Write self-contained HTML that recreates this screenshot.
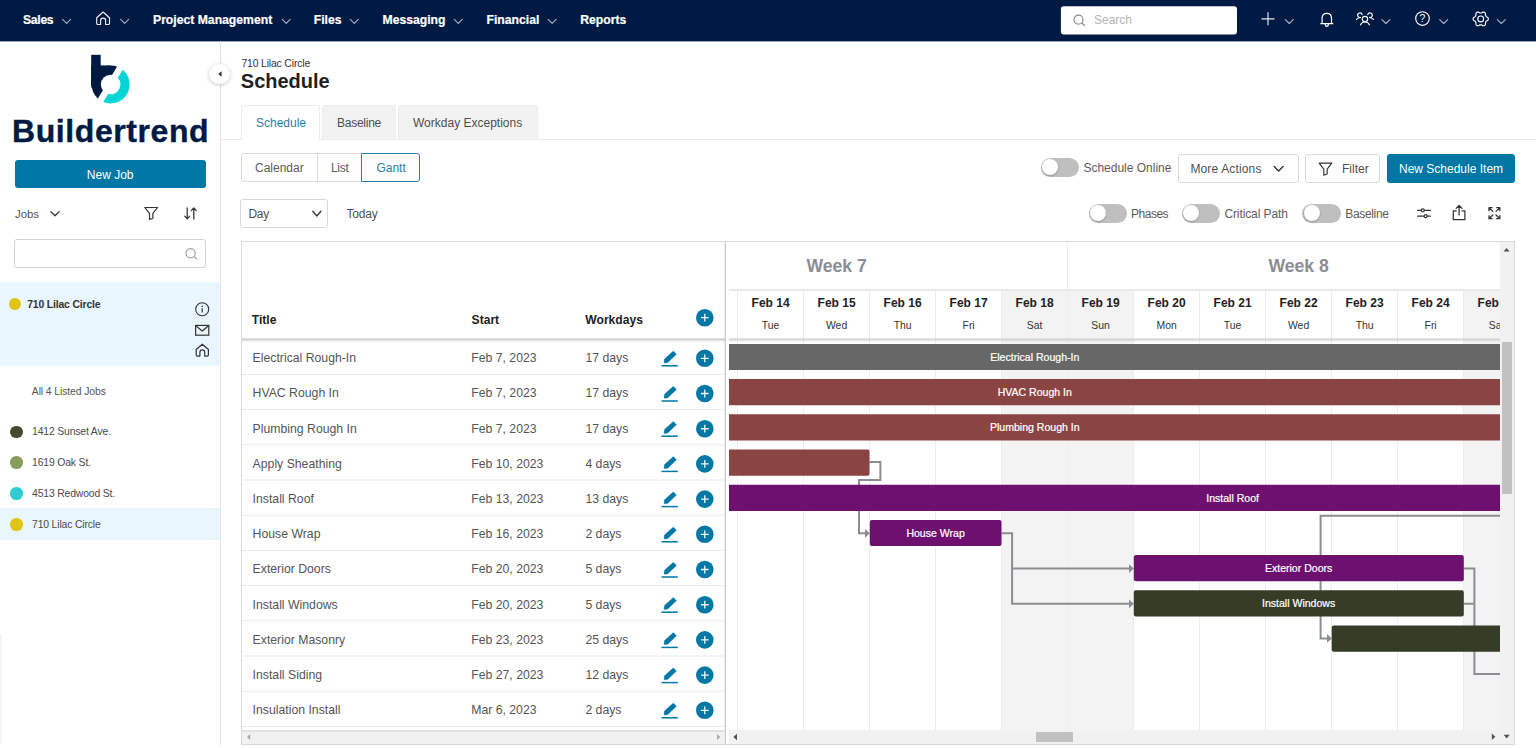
<!DOCTYPE html>
<html lang="en"><head><meta charset="utf-8"><title>Schedule - Buildertrend</title><style>
*{box-sizing:border-box;margin:0;padding:0}
html,body{width:1536px;height:748px;overflow:hidden;background:#fff}
body{position:relative;font-family:"Liberation Sans",Arial,sans-serif;font-size:12px;color:#404040}
.a{position:absolute}
.t{position:absolute;white-space:nowrap;height:20px;line-height:20px}
.nav{position:absolute;left:0;top:0;width:1536px;height:41px;background:#001a43}
.nv{color:#fff;font-weight:bold;font-size:12.2px;top:10.2px;-webkit-text-stroke:0.2px #fff}
svg{position:absolute;overflow:visible}
.ui{font-size:12px;color:#4f4f4f}
.btn{position:absolute;border:1px solid #d9d9d9;border-radius:3px;background:#fff}
.tog{position:absolute;width:38.4px;height:19px;border-radius:9.5px;background:#bfbfbf}
.tog i{position:absolute;left:1.5px;top:1.5px;width:16px;height:16px;border-radius:50%;background:#fff;box-shadow:0 1px 2px rgba(0,0,0,.25)}
.dot{position:absolute;width:12.6px;height:12.6px;border-radius:50%}
.sj{font-size:10.4px;letter-spacing:-0.15px;color:#4a4a4a}
.gh{font-weight:bold;font-size:12.1px;color:#222}
.gc{font-size:12.25px;color:#555}
.bar{position:absolute;height:26px;border-radius:2px;color:#fff;font-size:10.55px;-webkit-text-stroke:0.2px #fff;line-height:26px;white-space:nowrap;overflow:hidden}
.bar span{position:absolute;top:0.8px;transform:translateX(-50%)}
.dh{position:absolute;width:66px;text-align:center;white-space:nowrap}
.dh b{position:absolute;left:0;width:66px;top:0.5px;height:20px;line-height:20px;font-size:12px;color:#222}
.dh em{position:absolute;left:0;width:66px;top:23.6px;height:20px;line-height:20px;font-size:10.4px;font-style:normal;color:#333}
</style></head><body>
<div class="nav">
<div class="t nv" style="left:23px;letter-spacing:-0.3px">Sales</div>
<div class="t nv" style="left:153px">Project Management</div>
<div class="t nv" style="left:313.7px">Files</div>
<div class="t nv" style="left:382.5px">Messaging</div>
<div class="t nv" style="left:486.5px">Financial</div>
<div class="t nv" style="left:580.2px">Reports</div>
<svg style="left:0;top:0" width="1536" height="43" viewBox="0 0 1536 43"><rect x="0" y="41" width="1536" height="1" fill="#001a43" fill-opacity="0.4"/><rect x="1060.9" y="6.3" width="176.1" height="28.1" rx="3" fill="#fff"/></svg>
<div class="t" style="left:1094px;top:10px;font-size:12px;color:#b5b5b5">Search</div>
</div>
<div class="a" style="left:220px;top:41px;width:1px;height:704px;background:#e2e2e2"></div>
<div class="t" style="left:12px;top:110.8px;height:40px;line-height:40px;font-size:32px;font-weight:bold;color:#001a43;letter-spacing:0.58px;-webkit-text-stroke:0.4px #001a43">Buildertrend</div>
<div class="a" style="left:14.5px;top:160.2px;width:191.3px;height:28px;border-radius:3px;background:#0077a4"></div>
<div class="t" style="left:14.5px;width:191.3px;text-align:center;top:165.3px;color:#fff;font-size:12px">New Job</div>
<div class="t" style="left:15px;top:203.6px;font-size:11.4px;color:#555">Jobs</div>
<div class="a" style="left:14px;top:239px;width:192px;height:29px;border:1px solid #d4d4d4;border-radius:3px;background:#fff"></div>
<div class="a" style="left:0;top:282px;width:220px;height:84.4px;background:#eaf6fe"></div>
<div class="dot" style="left:8.7px;top:297.7px;background:#e0c514"></div>
<div class="t sj" style="left:27.2px;top:294.8px;font-weight:bold;color:#333">710 Lilac Circle</div>
<div class="t sj" style="left:31.8px;top:381.8px;letter-spacing:-0.1px;color:#555">All 4 Listed Jobs</div>
<div class="a" style="left:0;top:508.4px;width:220px;height:31.2px;background:#eaf6fe"></div>
<div class="dot" style="left:10.2px;top:425.6px;background:#424c2d"></div>
<div class="t sj" style="left:32px;top:422.4px">1412 Sunset Ave.</div>
<div class="dot" style="left:10.2px;top:456.4px;background:#869e5c"></div>
<div class="t sj" style="left:32px;top:453.2px">1619 Oak St.</div>
<div class="dot" style="left:10.2px;top:487.2px;background:#2ecbd3"></div>
<div class="t sj" style="left:32px;top:484.0px">4513 Redwood St.</div>
<div class="dot" style="left:10.2px;top:518.0px;background:#e0c514"></div>
<div class="t sj" style="left:32px;top:514.8px">710 Lilac Circle</div>
<div class="a" style="left:209.4px;top:63.6px;width:20.8px;height:20.8px;border-radius:50%;background:#fff;box-shadow:0 1px 4px rgba(0,0,0,.22)"></div>
<div class="t sj" style="left:241.4px;top:54.3px;color:#333">710 Lilac Circle</div>
<div class="t" style="left:240.8px;top:65.8px;height:30px;line-height:30px;font-size:20px;font-weight:bold;color:#1f1f1f">Schedule</div>
<div class="a" style="left:221px;top:139px;width:1315px;height:1px;background:#ebebeb"></div>
<div class="a" style="left:241.4px;top:105.4px;width:79px;height:34.6px;background:#fff;border:1px solid #ebebeb;border-bottom:none;border-radius:3px 3px 0 0"></div>
<div class="a" style="left:322.4px;top:105.4px;width:73.2px;height:33.6px;background:#f2f2f2;border:1px solid #ececec;border-bottom:none;border-radius:3px 3px 0 0"></div>
<div class="a" style="left:398.3px;top:105.4px;width:139.3px;height:33.6px;background:#f2f2f2;border:1px solid #ececec;border-bottom:none;border-radius:3px 3px 0 0"></div>
<div class="t ui" style="left:256px;top:113px;color:#2a7fa9">Schedule</div>
<div class="t ui" style="left:337px;top:113px;letter-spacing:-0.25px">Baseline</div>
<div class="t ui" style="left:413px;top:113px">Workday Exceptions</div>
<div class="btn" style="left:241px;top:153px;width:121px;height:29px;border-radius:3px 0 0 3px"></div>
<div class="a" style="left:317px;top:153px;width:1px;height:29px;background:#d9d9d9"></div>
<div class="btn" style="left:361px;top:153px;width:59px;height:29px;border-color:#2a7fa9;border-radius:0 3px 3px 0"></div>
<div class="t ui" style="left:255px;top:158.4px;color:#5a5a5a">Calendar</div>
<div class="t ui" style="left:331px;top:158.4px;letter-spacing:-0.3px;color:#5a5a5a">List</div>
<div class="t ui" style="left:376.4px;top:158.4px;color:#2a7fa9">Gantt</div>
<div class="btn" style="left:240px;top:199px;width:88px;height:29px"></div>
<div class="t ui" style="left:248.6px;top:204.2px;letter-spacing:-0.4px">Day</div>
<div class="t ui" style="left:346.4px;top:204.2px;letter-spacing:-0.15px">Today</div>
<div class="tog" style="left:1040.6px;top:157.9px"><i></i></div>
<div class="t ui" style="left:1083.4px;top:158px;color:#5c5c5c">Schedule Online</div>
<div class="btn" style="left:1178px;top:154px;width:121px;height:29px"></div>
<div class="t ui" style="left:1190.4px;top:159px;letter-spacing:0.15px">More Actions</div>
<div class="btn" style="left:1305px;top:154px;width:75px;height:29px"></div>
<div class="t ui" style="left:1342px;top:158.7px">Filter</div>
<div class="a" style="left:1387px;top:154px;width:128.4px;height:28.6px;border-radius:3px;background:#0077a4"></div>
<div class="t ui" style="left:1399px;top:158.7px;color:#fff">New Schedule Item</div>
<div class="tog" style="left:1088.8px;top:203.7px"><i></i></div>
<div class="t ui" style="left:1131.1px;top:203.8px;color:#5c5c5c;letter-spacing:-0.5px">Phases</div>
<div class="tog" style="left:1181.6px;top:203.7px"><i></i></div>
<div class="t ui" style="left:1224.4px;top:203.8px;color:#5c5c5c;letter-spacing:-0.1px">Critical Path</div>
<div class="tog" style="left:1302.2px;top:203.7px"><i></i></div>
<div class="t ui" style="left:1345.3px;top:203.8px;color:#5c5c5c;letter-spacing:-0.35px">Baseline</div>
<div class="a" style="left:241px;top:241px;width:1273.6px;height:503.6px;border:1px solid #dadada;background:#fff"></div>
<div class="a" style="left:1001.6px;top:291px;width:132px;height:439px;background:#f3f3f3"></div>
<div class="a" style="left:1463.6px;top:291px;width:36.6px;height:439px;background:#f3f3f3"></div>
<div class="a" style="left:729px;top:289px;width:771.2px;height:2px;background:#e9e9e9"></div>
<div class="a" style="left:1067.1px;top:242px;width:1px;height:48px;background:#ececec"></div>
<div class="a" style="left:737.1px;top:291px;width:1px;height:439px;background:#ececec"></div>
<div class="a" style="left:803.1px;top:291px;width:1px;height:439px;background:#ececec"></div>
<div class="a" style="left:869.1px;top:291px;width:1px;height:439px;background:#ececec"></div>
<div class="a" style="left:935.1px;top:291px;width:1px;height:439px;background:#ececec"></div>
<div class="a" style="left:1001.1px;top:291px;width:1px;height:439px;background:#ececec"></div>
<div class="a" style="left:1067.1px;top:291px;width:1px;height:439px;background:#ececec"></div>
<div class="a" style="left:1133.1px;top:291px;width:1px;height:439px;background:#ececec"></div>
<div class="a" style="left:1199.1px;top:291px;width:1px;height:439px;background:#ececec"></div>
<div class="a" style="left:1265.1px;top:291px;width:1px;height:439px;background:#ececec"></div>
<div class="a" style="left:1331.1px;top:291px;width:1px;height:439px;background:#ececec"></div>
<div class="a" style="left:1397.1px;top:291px;width:1px;height:439px;background:#ececec"></div>
<div class="a" style="left:1463.1px;top:291px;width:1px;height:439px;background:#ececec"></div>
<div class="t" style="left:605.6px;width:462px;text-align:center;top:252.3px;height:28px;line-height:28px;font-size:17.6px;font-weight:bold;color:#8a8d92">Week 7</div>
<div class="a" style="left:1067.6px;width:432.6px;top:242px;height:47px;overflow:hidden"><div class="t" style="left:0;width:462px;text-align:center;top:10.3px;height:28px;line-height:28px;font-size:17.6px;font-weight:bold;color:#8a8d92">Week 8</div></div>
<div class="a" style="left:729px;top:291px;width:771.2px;height:48px;overflow:hidden">
<div class="dh" style="left:8.6px;top:1.2px"><b>Feb 14</b><em>Tue</em></div>
<div class="dh" style="left:74.6px;top:1.2px"><b>Feb 15</b><em>Wed</em></div>
<div class="dh" style="left:140.6px;top:1.2px"><b>Feb 16</b><em>Thu</em></div>
<div class="dh" style="left:206.6px;top:1.2px"><b>Feb 17</b><em>Fri</em></div>
<div class="dh" style="left:272.6px;top:1.2px"><b>Feb 18</b><em>Sat</em></div>
<div class="dh" style="left:338.6px;top:1.2px"><b>Feb 19</b><em>Sun</em></div>
<div class="dh" style="left:404.6px;top:1.2px"><b>Feb 20</b><em>Mon</em></div>
<div class="dh" style="left:470.6px;top:1.2px"><b>Feb 21</b><em>Tue</em></div>
<div class="dh" style="left:536.6px;top:1.2px"><b>Feb 22</b><em>Wed</em></div>
<div class="dh" style="left:602.6px;top:1.2px"><b>Feb 23</b><em>Thu</em></div>
<div class="dh" style="left:668.6px;top:1.2px"><b>Feb 24</b><em>Fri</em></div>
<div class="dh" style="left:734.6px;top:1.2px"><b>Feb 25</b><em>Sat</em></div>
</div>
<div class="t gh" style="left:251.8px;top:310px">Title</div>
<div class="t gh" style="left:471.6px;top:310px">Start</div>
<div class="t gh" style="left:585.3px;top:310px">Workdays</div>
<svg style="left:0;top:0" width="1536" height="748" viewBox="0 0 1536 748"><rect x="242" y="338.4" width="483" height="1.9" fill="#cecece"/><rect x="242" y="340.3" width="483" height="1.5" fill="#000" fill-opacity="0.06"/><rect x="729" y="338.4" width="771.2" height="1.9" fill="#d4d4d4"/><rect x="729" y="340.3" width="771.2" height="1.5" fill="#000" fill-opacity="0.06"/></svg>
<div class="t gc" style="left:252.6px;top:348.1px">Electrical Rough-In</div>
<div class="t gc" style="left:471.2px;top:348.1px">Feb 7, 2023</div>
<div class="t gc" style="left:585.4px;top:348.1px">17 days</div>
<div class="t gc" style="left:252.6px;top:383.3px">HVAC Rough In</div>
<div class="t gc" style="left:471.2px;top:383.3px">Feb 7, 2023</div>
<div class="t gc" style="left:585.4px;top:383.3px">17 days</div>
<div class="t gc" style="left:252.6px;top:418.5px">Plumbing Rough In</div>
<div class="t gc" style="left:471.2px;top:418.5px">Feb 7, 2023</div>
<div class="t gc" style="left:585.4px;top:418.5px">17 days</div>
<div class="t gc" style="left:252.6px;top:453.7px">Apply Sheathing</div>
<div class="t gc" style="left:471.2px;top:453.7px">Feb 10, 2023</div>
<div class="t gc" style="left:585.4px;top:453.7px">4 days</div>
<div class="t gc" style="left:252.6px;top:488.9px">Install Roof</div>
<div class="t gc" style="left:471.2px;top:488.9px">Feb 13, 2023</div>
<div class="t gc" style="left:585.4px;top:488.9px">13 days</div>
<div class="t gc" style="left:252.6px;top:524.1px">House Wrap</div>
<div class="t gc" style="left:471.2px;top:524.1px">Feb 16, 2023</div>
<div class="t gc" style="left:585.4px;top:524.1px">2 days</div>
<div class="t gc" style="left:252.6px;top:559.3px">Exterior Doors</div>
<div class="t gc" style="left:471.2px;top:559.3px">Feb 20, 2023</div>
<div class="t gc" style="left:585.4px;top:559.3px">5 days</div>
<div class="t gc" style="left:252.6px;top:594.5px">Install Windows</div>
<div class="t gc" style="left:471.2px;top:594.5px">Feb 20, 2023</div>
<div class="t gc" style="left:585.4px;top:594.5px">5 days</div>
<div class="t gc" style="left:252.6px;top:629.7px">Exterior Masonry</div>
<div class="t gc" style="left:471.2px;top:629.7px">Feb 23, 2023</div>
<div class="t gc" style="left:585.4px;top:629.7px">25 days</div>
<div class="t gc" style="left:252.6px;top:664.9px">Install Siding</div>
<div class="t gc" style="left:471.2px;top:664.9px">Feb 27, 2023</div>
<div class="t gc" style="left:585.4px;top:664.9px">12 days</div>
<div class="t gc" style="left:252.6px;top:700.1px">Insulation Install</div>
<div class="t gc" style="left:471.2px;top:700.1px">Mar 6, 2023</div>
<div class="t gc" style="left:585.4px;top:700.1px">2 days</div>
<svg style="left:0;top:0" width="1536" height="748" viewBox="0 0 1536 748"><defs><clipPath id="tlc"><rect x="729" y="341" width="771.2" height="389"/></clipPath></defs><g clip-path="url(#tlc)"><g fill="none" stroke="#8a8d91" stroke-width="2" stroke-linejoin="miter">
<path d="M869.4 462.0 H880.4 V480.1 H859 V533.3 H866"/>
<path d="M1001.5 533.3 H1012.1 V603.8 H1130 M1012.1 568.6 H1130"/>
<path d="M1502 515.8 H1320.6 V638.4 H1328"/>
<path d="M1463.6 568.6 H1474.4 V673.9 H1502 M1463.6 603.8 H1474.4"/>
</g>
<path d="M869.8 533.3 L865.0 528.9 V537.7 Z" fill="#8a8d91"/>
<path d="M1133.8 568.6 L1129.0 564.2 V573.0 Z" fill="#8a8d91"/>
<path d="M1133.8 603.8 L1129.0 599.4 V608.2 Z" fill="#8a8d91"/>
<path d="M1331.8 638.4 L1327.0 634.0 V642.8 Z" fill="#8a8d91"/>
<rect x="700" y="343.9" width="840.0" height="26.2" rx="2" fill="#676767"/>
<text x="1034.8" y="360.8" text-anchor="middle" font-family="Liberation Sans, Arial, sans-serif" font-size="10.55" fill="#fff" stroke="#fff" stroke-width="0.2">Electrical Rough-In</text>
<rect x="700" y="379.1" width="840.0" height="26.2" rx="2" fill="#8b4444"/>
<text x="1034.8" y="396.0" text-anchor="middle" font-family="Liberation Sans, Arial, sans-serif" font-size="10.55" fill="#fff" stroke="#fff" stroke-width="0.2">HVAC Rough In</text>
<rect x="700" y="414.3" width="840.0" height="26.2" rx="2" fill="#8b4444"/>
<text x="1034.8" y="431.2" text-anchor="middle" font-family="Liberation Sans, Arial, sans-serif" font-size="10.55" fill="#fff" stroke="#fff" stroke-width="0.2">Plumbing Rough In</text>
<rect x="700" y="449.5" width="169.5" height="26.2" rx="2" fill="#8b4444"/>
<rect x="700" y="484.7" width="840.0" height="26.2" rx="2" fill="#6e106f"/>
<text x="1232.6" y="501.6" text-anchor="middle" font-family="Liberation Sans, Arial, sans-serif" font-size="10.55" fill="#fff" stroke="#fff" stroke-width="0.2">Install Roof</text>
<rect x="869.8" y="519.9" width="131.7" height="26.2" rx="2" fill="#6e106f"/>
<text x="935.6" y="536.8" text-anchor="middle" font-family="Liberation Sans, Arial, sans-serif" font-size="10.55" fill="#fff" stroke="#fff" stroke-width="0.2">House Wrap</text>
<rect x="1133.8" y="555.1" width="330.0" height="26.2" rx="2" fill="#6e106f"/>
<text x="1298.6" y="572.0" text-anchor="middle" font-family="Liberation Sans, Arial, sans-serif" font-size="10.55" fill="#fff" stroke="#fff" stroke-width="0.2">Exterior Doors</text>
<rect x="1133.8" y="590.3" width="330.0" height="26.2" rx="2" fill="#353d27"/>
<text x="1298.6" y="607.2" text-anchor="middle" font-family="Liberation Sans, Arial, sans-serif" font-size="10.55" fill="#fff" stroke="#fff" stroke-width="0.2">Install Windows</text>
<rect x="1331.7" y="625.5" width="208.3" height="26.2" rx="2" fill="#353d27"/>
</g></svg>
<div class="a" style="left:724.9px;top:242px;width:1.4px;height:502px;background:#c8c8c8"></div>
<div class="a" style="left:722.9px;top:242px;width:2px;height:502px;background:linear-gradient(to right,rgba(0,0,0,0),rgba(0,0,0,0.07))"></div>
<div class="a" style="left:726.3px;top:242px;width:2.6px;height:502px;background:#fff"></div>
<div class="a" style="left:242px;top:730px;width:483px;height:14px;background:#f1f1f1"></div>
<svg style="left:0;top:0" width="1536" height="748" viewBox="0 0 1536 748"><rect x="242" y="730.2" width="483" height="1.5" fill="#dcdcdc"/></svg>
<div class="a" style="left:729px;top:730px;width:785px;height:14px;background:#f1f1f1"></div>
<div class="a" style="left:1500.2px;top:242px;width:13.6px;height:502px;background:#f1f1f1"></div>
<div class="a" style="left:1036px;top:731.8px;width:37px;height:10.4px;background:#c1c1c1"></div>
<div class="a" style="left:1502px;top:342.2px;width:10px;height:151.6px;background:#c1c1c1"></div>
<svg style="left:0;top:0" width="1536" height="748" viewBox="0 0 1536 748"><path d="M1503.6 251.6 L1506.6 248 L1509.6 251.6 Z" fill="#505050"/><path d="M1503.7 734.8 L1506.7 738.4 L1509.7 734.8 Z" fill="#505050"/><path d="M1491.8 733.6 L1495.4 736.8 L1491.8 740 Z" fill="#505050"/><path d="M737 733.7 L733.4 737 L737 740.3 Z" fill="#505050"/><path d="M717 733.9 L720.2 737 L717 740.1 Z" fill="#a9a9a9"/><path d="M250.2 733.9 L247 737 L250.2 740.1 Z" fill="#a9a9a9"/></svg>
<div class="a" style="left:0;top:634px;width:3px;height:110px;background:linear-gradient(to right,rgba(0,0,0,0.05),rgba(0,0,0,0))"></div>
<svg style="left:0;top:0;pointer-events:none" width="1536" height="748" viewBox="0 0 1536 748"><g transform="translate(62.3 19)"><path d="M0.3 0.4 L4.3 4.3 L8.299999999999999 0.4" fill="none" stroke="#a3acc0" stroke-width="1.15" stroke-linecap="round" stroke-linejoin="round"/></g>
<g transform="translate(120.3 19)"><path d="M0.3 0.4 L4.3 4.3 L8.299999999999999 0.4" fill="none" stroke="#a3acc0" stroke-width="1.15" stroke-linecap="round" stroke-linejoin="round"/></g>
<g transform="translate(281.9 19)"><path d="M0.3 0.4 L4.3 4.3 L8.299999999999999 0.4" fill="none" stroke="#a3acc0" stroke-width="1.15" stroke-linecap="round" stroke-linejoin="round"/></g>
<g transform="translate(350 19)"><path d="M0.3 0.4 L4.3 4.3 L8.299999999999999 0.4" fill="none" stroke="#a3acc0" stroke-width="1.15" stroke-linecap="round" stroke-linejoin="round"/></g>
<g transform="translate(454 19)"><path d="M0.3 0.4 L4.3 4.3 L8.299999999999999 0.4" fill="none" stroke="#a3acc0" stroke-width="1.15" stroke-linecap="round" stroke-linejoin="round"/></g>
<g transform="translate(547.8 19)"><path d="M0.3 0.4 L4.3 4.3 L8.299999999999999 0.4" fill="none" stroke="#a3acc0" stroke-width="1.15" stroke-linecap="round" stroke-linejoin="round"/></g>
<g transform="translate(96 11.2)"><path d="M0.7 6.5 L7.1 0.8 L13.5 6.5 V12 Q13.5 13.3 12.2 13.3 H9.6 V9.2 Q9.6 6.9 7.1 6.9 Q4.6 6.9 4.6 9.2 V13.3 H2 Q0.7 13.3 0.7 12 Z" fill="none" stroke="#eceef3" stroke-width="1.15" stroke-linejoin="round"/></g>
<g transform="translate(1073.3 14.5)"><circle cx="5.2" cy="5.2" r="4.5" fill="none" stroke="#8c8c8c" stroke-width="1.2"/><path d="M8.5 8.5 L11.3 11" stroke="#8c8c8c" stroke-width="1.2" stroke-linecap="round"/></g>
<g transform="translate(1261 12)"><path d="M7 0.3 V13.3 M0.5 6.8 H13.5" stroke="#e6e9ef" stroke-width="1.15" fill="none"/></g>
<g transform="translate(1285 19.2)"><path d="M0.3 0.4 L4.3 4.3 L8.299999999999999 0.4" fill="none" stroke="#a3acc0" stroke-width="1.15" stroke-linecap="round" stroke-linejoin="round"/></g>
<g transform="translate(1320 12.1) scale(1.0000 1.0200)"><path d="M0.8 11.4 H12.8 M2.1 11.4 V6.2 Q2.1 1.2 6.8 1.2 Q11.5 1.2 11.5 6.2 V11.4 M5.2 12 Q5.4 14 6.8 14 Q8.2 14 8.4 12" fill="none" stroke="#fff" stroke-width="1.2" stroke-linecap="round" stroke-linejoin="round"/></g>
<g transform="translate(1356 12)"><g fill="none" stroke="#fff" stroke-width="1.15" stroke-linecap="round"><circle cx="8.95" cy="7.05" r="2.7"/><path d="M4.5 12.8 A4.95 4.95 0 0 1 13.4 12.8"/><path d="M6.15 2.7 A2.3 2.3 0 1 0 4.4 5.45"/><path d="M0.5 7.4 Q1.9 5.8 4.3 5.55"/><path d="M11.75 2.7 A2.3 2.3 0 1 1 13.5 5.45"/><path d="M17.4 7.4 Q16 5.8 13.6 5.55"/></g></g>
<g transform="translate(1381.6 19.2)"><path d="M0.3 0.4 L4.3 4.3 L8.299999999999999 0.4" fill="none" stroke="#a3acc0" stroke-width="1.15" stroke-linecap="round" stroke-linejoin="round"/></g>
<g transform="translate(1415 11)"><circle cx="7.5" cy="7.5" r="6.8" fill="none" stroke="#fff" stroke-width="1.15"/><text x="7.5" y="11.3" text-anchor="middle" font-family="Liberation Sans, Arial, sans-serif" font-size="10.4" fill="#fff">?</text></g>
<g transform="translate(1439.4 19.2)"><path d="M0.3 0.4 L4.3 4.3 L8.299999999999999 0.4" fill="none" stroke="#a3acc0" stroke-width="1.15" stroke-linecap="round" stroke-linejoin="round"/></g>
<g transform="translate(1472.7 10.9)"><path d="M15.60 8.00 L15.54 8.49 L15.38 8.97 L15.09 9.41 L14.52 9.75 L13.94 10.02 L13.60 10.32 L13.33 10.63 L13.11 10.95 L12.94 11.30 L12.81 11.69 L12.72 12.14 L12.77 12.77 L12.77 13.43 L12.53 13.90 L12.20 14.29 L11.80 14.58 L11.34 14.78 L10.85 14.87 L10.32 14.84 L9.75 14.52 L9.22 14.15 L8.79 14.01 L8.39 13.93 L8.00 13.90 L7.61 13.93 L7.21 14.01 L6.78 14.15 L6.25 14.52 L5.68 14.84 L5.15 14.87 L4.66 14.78 L4.20 14.58 L3.80 14.29 L3.47 13.90 L3.23 13.43 L3.23 12.77 L3.28 12.14 L3.19 11.69 L3.06 11.30 L2.89 10.95 L2.67 10.63 L2.40 10.32 L2.06 10.02 L1.48 9.75 L0.91 9.41 L0.62 8.97 L0.46 8.49 L0.40 8.00 L0.46 7.51 L0.62 7.03 L0.91 6.59 L1.48 6.25 L2.06 5.98 L2.40 5.68 L2.67 5.37 L2.89 5.05 L3.06 4.70 L3.19 4.31 L3.28 3.86 L3.23 3.23 L3.23 2.57 L3.47 2.10 L3.80 1.71 L4.20 1.42 L4.66 1.22 L5.15 1.13 L5.68 1.16 L6.25 1.48 L6.78 1.85 L7.21 1.99 L7.61 2.07 L8.00 2.10 L8.39 2.07 L8.79 1.99 L9.22 1.85 L9.75 1.48 L10.32 1.16 L10.85 1.13 L11.34 1.22 L11.80 1.42 L12.20 1.71 L12.53 2.10 L12.77 2.57 L12.77 3.23 L12.72 3.86 L12.81 4.31 L12.94 4.70 L13.11 5.05 L13.33 5.37 L13.60 5.68 L13.94 5.98 L14.52 6.25 L15.09 6.59 L15.38 7.03 L15.54 7.51 Z" fill="none" stroke="#fff" stroke-width="1.15" stroke-linejoin="round"/><circle cx="8" cy="8" r="2.9" fill="none" stroke="#fff" stroke-width="1.15"/></g>
<g transform="translate(1497 19.2)"><path d="M0.3 0.4 L4.3 4.3 L8.299999999999999 0.4" fill="none" stroke="#a3acc0" stroke-width="1.15" stroke-linecap="round" stroke-linejoin="round"/></g>
<g transform="translate(80 48)"><defs><mask id="lh"><rect x="0" y="0" width="60" height="62" fill="#fff"/><circle cx="30.65" cy="36.45" r="9.8" fill="#000"/></mask><clipPath id="ln"><polygon points="48.08,0.26 6.88,68.82 -40,68.82 -40,-10 48.08,-10"/></clipPath><clipPath id="lt"><polygon points="53.65,3.61 12.45,72.17 100,72.17 100,-10 53.65,-10"/></clipPath></defs><g mask="url(#lh)"><g clip-path="url(#ln)" fill="#001a43"><rect x="11.2" y="6.8" width="9.5" height="30"/><rect x="11.2" y="17.45" width="19.5" height="19"/><circle cx="30.65" cy="36.45" r="19"/><rect x="11.2" y="30" width="6" height="9.5"/></g><g clip-path="url(#lt)"><circle cx="30.65" cy="36.45" r="19" fill="#04d4d6"/></g></g></g>
<g transform="translate(50.5 211.2)"><path d="M0.3 0.4 L4.5 4.6 L8.7 0.4" fill="none" stroke="#333" stroke-width="1.3" stroke-linecap="round" stroke-linejoin="round"/></g>
<g transform="translate(144 206.8)"><path d="M0.8 0.7 H13.6 L8.9 6.6 V11.4 L5.5 12.7 V6.6 Z" fill="none" stroke="#333" stroke-width="1.2" stroke-linejoin="round"/></g>
<g transform="translate(184 207.2)"><path d="M3.2 0.6 V11.6 M0.7 9 L3.2 11.7 L5.7 9 M9.8 11.8 V0.8 M7.3 3.4 L9.8 0.7 L12.3 3.4" fill="none" stroke="#333" stroke-width="1.25" stroke-linejoin="round" stroke-linecap="round"/></g>
<g transform="translate(185.4 248)"><circle cx="5.2" cy="5.2" r="4.6" fill="none" stroke="#9e9e9e" stroke-width="1.15"/><path d="M8.6 8.6 L11.4 11.1" stroke="#9e9e9e" stroke-width="1.15" stroke-linecap="round"/></g>
<g transform="translate(195 302)"><circle cx="7.2" cy="7.2" r="6.5" fill="none" stroke="#333" stroke-width="1.1"/><path d="M7.2 6.3 V10.6" stroke="#333" stroke-width="1.2"/><circle cx="7.2" cy="4.2" r="0.8" fill="#333"/></g>
<g transform="translate(195 324.8)"><rect x="0.6" y="0.6" width="13.2" height="9.8" fill="none" stroke="#333" stroke-width="1.2"/><path d="M0.8 0.9 L7.2 6.2 L13.6 0.9" fill="none" stroke="#333" stroke-width="1.2" stroke-linejoin="round"/></g>
<g transform="translate(195.5 343.4)"><path d="M0.7 6.1 L6.8 0.8 L12.9 6.1 V11.4 Q12.9 12.7 11.6 12.7 H9.2 V8.8 Q9.2 6.5 6.8 6.5 Q4.4 6.5 4.4 8.8 V12.7 H2 Q0.7 12.7 0.7 11.4 Z" fill="none" stroke="#333" stroke-width="1.2" stroke-linejoin="round"/></g>
<g transform="translate(217.8 71)"><path d="M3.8 0.2 V5.8 L0.4 3 Z" fill="#333"/></g>
<g transform="translate(312.5 210.9)"><path d="M0.3 0.4 L4.35 5 L8.399999999999999 0.4" fill="none" stroke="#3c3c3c" stroke-width="1.45" stroke-linecap="round" stroke-linejoin="round"/></g>
<g transform="translate(1273.8 166)"><path d="M0.3 0.4 L4.8 5 L9.299999999999999 0.4" fill="none" stroke="#333" stroke-width="1.4" stroke-linecap="round" stroke-linejoin="round"/></g>
<g transform="translate(1318.4 162.4) scale(0.9861 1.0149)"><path d="M0.8 0.7 H13.6 L8.9 6.6 V11.4 L5.5 12.7 V6.6 Z" fill="none" stroke="#333" stroke-width="1.2" stroke-linejoin="round"/></g>
<g transform="translate(1417 207.4)"><g fill="none" stroke="#333" stroke-width="1.2" stroke-linecap="round"><path d="M0.6 3 H4.2 M7.4 3 H13.4 M0.6 8.8 H7 M10.2 8.8 H13.4"/><circle cx="5.8" cy="3" r="1.5"/><circle cx="8.6" cy="8.8" r="1.5"/></g></g>
<g transform="translate(1452.6 204.8)"><path d="M3.6 6 H0.7 V14.7 H12.3 V6 H9.4 M6.5 10.2 V0.9 M3.6 3.6 L6.5 0.7 L9.4 3.6" fill="none" stroke="#333" stroke-width="1.25" stroke-linejoin="round" stroke-linecap="round"/></g>
<g transform="translate(1488.3 207) scale(0.9683 0.9538)"><g fill="none" stroke="#333" stroke-width="1.3" stroke-linecap="round" stroke-linejoin="round"><path d="M0.7 3.9 V0.7 H3.9 M0.9 0.9 L4.6 4.6"/><path d="M11.9 3.9 V0.7 H8.7 M11.7 0.9 L8 4.6"/><path d="M0.7 9.1 V12.3 H3.9 M0.9 12.1 L4.6 8.4"/><path d="M11.9 9.1 V12.3 H8.7 M11.7 12.1 L8 8.4"/></g></g>
<g transform="translate(696 308.9)"><circle cx="8.8" cy="8.8" r="8.8" fill="#0077a4"/><path d="M4.9 8.8 H12.7 M8.8 4.9 V12.7" stroke="#eef6fa" stroke-width="1.35"/></g>
<g transform="translate(661.5 350.6)"><path d="M2.5 12.4 L2.9 8.4 L11.8 0.4 L15 3.6 L6.1 12.2 Z" fill="#0077a4" stroke="#0077a4" stroke-width="0.25" stroke-linejoin="round"/><path d="M0 15.2 H16.3" stroke="#0077a4" stroke-width="1.5"/></g>
<g transform="translate(696 349.5)"><circle cx="8.8" cy="8.8" r="8.8" fill="#0077a4"/><path d="M4.9 8.8 H12.7 M8.8 4.9 V12.7" stroke="#eef6fa" stroke-width="1.35"/></g>
<g transform="translate(242 372.9)"><rect x="0" y="1" width="483" height="1" fill="#e9e9e9"/></g>
<g transform="translate(661.5 385.8)"><path d="M2.5 12.4 L2.9 8.4 L11.8 0.4 L15 3.6 L6.1 12.2 Z" fill="#0077a4" stroke="#0077a4" stroke-width="0.25" stroke-linejoin="round"/><path d="M0 15.2 H16.3" stroke="#0077a4" stroke-width="1.5"/></g>
<g transform="translate(696 384.7)"><circle cx="8.8" cy="8.8" r="8.8" fill="#0077a4"/><path d="M4.9 8.8 H12.7 M8.8 4.9 V12.7" stroke="#eef6fa" stroke-width="1.35"/></g>
<g transform="translate(242 408.1)"><rect x="0" y="1" width="483" height="1" fill="#e9e9e9"/></g>
<g transform="translate(661.5 421)"><path d="M2.5 12.4 L2.9 8.4 L11.8 0.4 L15 3.6 L6.1 12.2 Z" fill="#0077a4" stroke="#0077a4" stroke-width="0.25" stroke-linejoin="round"/><path d="M0 15.2 H16.3" stroke="#0077a4" stroke-width="1.5"/></g>
<g transform="translate(696 419.9)"><circle cx="8.8" cy="8.8" r="8.8" fill="#0077a4"/><path d="M4.9 8.8 H12.7 M8.8 4.9 V12.7" stroke="#eef6fa" stroke-width="1.35"/></g>
<g transform="translate(242 443.3)"><rect x="0" y="1" width="483" height="1" fill="#e9e9e9"/></g>
<g transform="translate(661.5 456.2)"><path d="M2.5 12.4 L2.9 8.4 L11.8 0.4 L15 3.6 L6.1 12.2 Z" fill="#0077a4" stroke="#0077a4" stroke-width="0.25" stroke-linejoin="round"/><path d="M0 15.2 H16.3" stroke="#0077a4" stroke-width="1.5"/></g>
<g transform="translate(696 455.1)"><circle cx="8.8" cy="8.8" r="8.8" fill="#0077a4"/><path d="M4.9 8.8 H12.7 M8.8 4.9 V12.7" stroke="#eef6fa" stroke-width="1.35"/></g>
<g transform="translate(242 478.5)"><rect x="0" y="1" width="483" height="1" fill="#e9e9e9"/></g>
<g transform="translate(661.5 491.4)"><path d="M2.5 12.4 L2.9 8.4 L11.8 0.4 L15 3.6 L6.1 12.2 Z" fill="#0077a4" stroke="#0077a4" stroke-width="0.25" stroke-linejoin="round"/><path d="M0 15.2 H16.3" stroke="#0077a4" stroke-width="1.5"/></g>
<g transform="translate(696 490.3)"><circle cx="8.8" cy="8.8" r="8.8" fill="#0077a4"/><path d="M4.9 8.8 H12.7 M8.8 4.9 V12.7" stroke="#eef6fa" stroke-width="1.35"/></g>
<g transform="translate(242 513.7)"><rect x="0" y="1" width="483" height="1" fill="#e9e9e9"/></g>
<g transform="translate(661.5 526.6)"><path d="M2.5 12.4 L2.9 8.4 L11.8 0.4 L15 3.6 L6.1 12.2 Z" fill="#0077a4" stroke="#0077a4" stroke-width="0.25" stroke-linejoin="round"/><path d="M0 15.2 H16.3" stroke="#0077a4" stroke-width="1.5"/></g>
<g transform="translate(696 525.5)"><circle cx="8.8" cy="8.8" r="8.8" fill="#0077a4"/><path d="M4.9 8.8 H12.7 M8.8 4.9 V12.7" stroke="#eef6fa" stroke-width="1.35"/></g>
<g transform="translate(242 548.9)"><rect x="0" y="1" width="483" height="1" fill="#e9e9e9"/></g>
<g transform="translate(661.5 561.8)"><path d="M2.5 12.4 L2.9 8.4 L11.8 0.4 L15 3.6 L6.1 12.2 Z" fill="#0077a4" stroke="#0077a4" stroke-width="0.25" stroke-linejoin="round"/><path d="M0 15.2 H16.3" stroke="#0077a4" stroke-width="1.5"/></g>
<g transform="translate(696 560.7)"><circle cx="8.8" cy="8.8" r="8.8" fill="#0077a4"/><path d="M4.9 8.8 H12.7 M8.8 4.9 V12.7" stroke="#eef6fa" stroke-width="1.35"/></g>
<g transform="translate(242 584.1)"><rect x="0" y="1" width="483" height="1" fill="#e9e9e9"/></g>
<g transform="translate(661.5 597)"><path d="M2.5 12.4 L2.9 8.4 L11.8 0.4 L15 3.6 L6.1 12.2 Z" fill="#0077a4" stroke="#0077a4" stroke-width="0.25" stroke-linejoin="round"/><path d="M0 15.2 H16.3" stroke="#0077a4" stroke-width="1.5"/></g>
<g transform="translate(696 595.9)"><circle cx="8.8" cy="8.8" r="8.8" fill="#0077a4"/><path d="M4.9 8.8 H12.7 M8.8 4.9 V12.7" stroke="#eef6fa" stroke-width="1.35"/></g>
<g transform="translate(242 619.3)"><rect x="0" y="1" width="483" height="1" fill="#e9e9e9"/></g>
<g transform="translate(661.5 632.2)"><path d="M2.5 12.4 L2.9 8.4 L11.8 0.4 L15 3.6 L6.1 12.2 Z" fill="#0077a4" stroke="#0077a4" stroke-width="0.25" stroke-linejoin="round"/><path d="M0 15.2 H16.3" stroke="#0077a4" stroke-width="1.5"/></g>
<g transform="translate(696 631.1)"><circle cx="8.8" cy="8.8" r="8.8" fill="#0077a4"/><path d="M4.9 8.8 H12.7 M8.8 4.9 V12.7" stroke="#eef6fa" stroke-width="1.35"/></g>
<g transform="translate(242 654.5)"><rect x="0" y="1" width="483" height="1" fill="#e9e9e9"/></g>
<g transform="translate(661.5 667.4)"><path d="M2.5 12.4 L2.9 8.4 L11.8 0.4 L15 3.6 L6.1 12.2 Z" fill="#0077a4" stroke="#0077a4" stroke-width="0.25" stroke-linejoin="round"/><path d="M0 15.2 H16.3" stroke="#0077a4" stroke-width="1.5"/></g>
<g transform="translate(696 666.3)"><circle cx="8.8" cy="8.8" r="8.8" fill="#0077a4"/><path d="M4.9 8.8 H12.7 M8.8 4.9 V12.7" stroke="#eef6fa" stroke-width="1.35"/></g>
<g transform="translate(242 689.7)"><rect x="0" y="1" width="483" height="1" fill="#e9e9e9"/></g>
<g transform="translate(661.5 702.6)"><path d="M2.5 12.4 L2.9 8.4 L11.8 0.4 L15 3.6 L6.1 12.2 Z" fill="#0077a4" stroke="#0077a4" stroke-width="0.25" stroke-linejoin="round"/><path d="M0 15.2 H16.3" stroke="#0077a4" stroke-width="1.5"/></g>
<g transform="translate(696 701.5)"><circle cx="8.8" cy="8.8" r="8.8" fill="#0077a4"/><path d="M4.9 8.8 H12.7 M8.8 4.9 V12.7" stroke="#eef6fa" stroke-width="1.35"/></g>
<g transform="translate(242 724.9)"><rect x="0" y="1" width="483" height="1" fill="#e9e9e9"/></g></svg>
</body></html>
